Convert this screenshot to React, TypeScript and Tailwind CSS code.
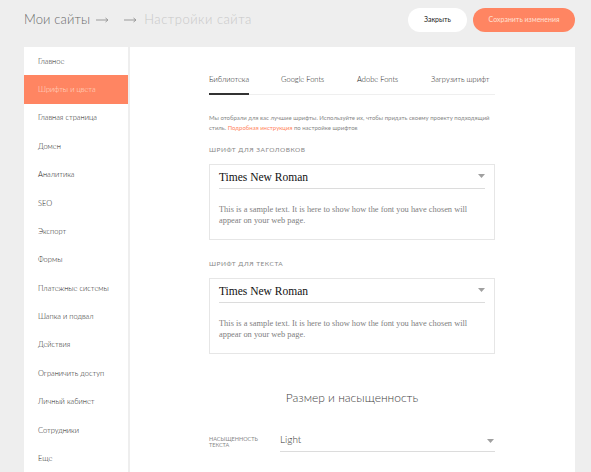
import React from "react";

const FONT = { fontFamily: "Lato, 'Noto Sans', sans-serif" };
const SERIF = { fontFamily: "'Liberation Serif', serif" };

const menu = [
  "Главное",
  "Шрифты и цвета",
  "Главная страница",
  "Домен",
  "Аналитика",
  "SEO",
  "Экспорт",
  "Формы",
  "Платежные системы",
  "Шапка и подвал",
  "Действия",
  "Ограничить доступ",
  "Личный кабинет",
  "Сотрудники",
  "Еще",
];

const tabs = [
  { label: "Библиотека", w: "w-[72px]" },
  { label: "Google Fonts", w: "w-[76px]" },
  { label: "Adobe Fonts", w: "w-[74px]" },
  { label: "Загрузить шрифт", w: "" },
];

const Caret = () => (
  <svg width="7" height="4" viewBox="0 0 7 4">
    <path d="M0 0h7L3.5 4z" fill="#a0a0a0" />
  </svg>
);

const Arrow = ({ color }: { color: string }) => (
  <svg width="13" height="6" viewBox="0 0 13 6">
    <path d="M0 3h12M9.5 1l2.5 2-2.5 2" stroke={color} strokeWidth="1" fill="none" />
  </svg>
);

const FontBox = ({ label }: { label: string }) => (
  <div>
    <div className="text-[6.5px] leading-[8px] uppercase tracking-[0.08em] text-[#888]">{label}</div>
    <div className="mt-[10px] border border-[#e6e6e6] px-[9px] pt-[6px] pb-[13px]">
      <div className="flex items-center justify-between border-b border-[#dcdcdc] pb-[4px]">
        <span className="text-[11.5px] leading-[13px] text-[#111]" style={SERIF}>
          Times New Roman
        </span>
        <span className="mb-[3px]"><Caret /></span>
      </div>
      <p className="mt-[15px] text-[8.4px] leading-[11px] text-[#808080]" style={SERIF}>
        This is a sample text. It is here to show how the font you have chosen will appear on your web page.
      </p>
    </div>
  </div>
);

export default function App() {
  return (
    <div className="w-[591px] h-[472px] overflow-hidden bg-[#eeeeee] pl-[24px] pr-[16px] text-[#333]" style={FONT}>
      {/* Header */}
      <header className="flex h-[47px] items-center justify-between pb-[8px]">
        <div className="flex items-center text-[13px] font-light">
          <span className="text-[#6a6a6a] tracking-[0.01em]">Мои сайты</span>
          <span className="ml-[6px]"><Arrow color="#9a9a9a" /></span>
          <span className="ml-[15px]"><Arrow color="#9a9a9a" /></span>
          <span className="ml-[7px] text-[#c8c8c8] tracking-[0.04em]">Настройки сайта</span>
        </div>
        <div className="flex items-center gap-[6px]">
          <button className="h-[24px] w-[59px] rounded-full bg-white text-[7px] text-[#222]">Закрыть</button>
          <button className="h-[24px] w-[102px] rounded-full bg-[#ff8562] text-[7px] text-[#ffe0d4]">
            Сохранить изменения
          </button>
        </div>
      </header>

      <div className="flex gap-[2px]">
        {/* Sidebar */}
        <aside className="w-[104px] shrink-0 bg-white h-[440px]">
          {menu.map((item) => (
            <div
              key={item}
              className={
                "flex h-[28.4px] items-center pl-[14px] text-[7.5px] font-light whitespace-nowrap " +
                (item === "Шрифты и цвета" ? "bg-[#ff8562] text-[#ffe0d4]" : "text-[#222]")
              }
            >
              {item}
            </div>
          ))}
        </aside>

        {/* Main */}
        <main className="flex-1 bg-white h-[440px]">
          <div className="ml-[79px] w-[286px] pt-[28px]">
            <div className="flex border-b border-[#efefef] text-[7.5px] leading-[9px] font-light text-[#222]">
              {tabs.map((t, i) => (
                <div key={t.label} className={"whitespace-nowrap " + t.w}>
                  <span
                    className={
                      "inline-block pb-[9px] " + (i === 0 ? "border-b-2 border-[#333] -mb-[1px]" : "")
                    }
                  >
                    {t.label}
                  </span>
                </div>
              ))}
            </div>

            <p className="mt-[18px] text-[6px] leading-[10px] text-[#888]">
              Мы отобрали для вас лучшие шрифты. Используйте их, чтобы придать своему проекту подходящий стиль.{" "}
              <span className="text-[#ff8562]">Подробная инструкция</span> по настройке шрифтов
            </p>

            <div className="mt-[13px]">
              <FontBox label="Шрифт для заголовков" />
            </div>
            <div className="mt-[20px]">
              <FontBox label="Шрифт для текста" />
            </div>

            <div className="mt-[36px] text-center text-[12px] leading-[15px] font-light text-[#444]">
              Размер и насыщенность
            </div>

            <div className="mt-[28px] flex items-start">
              <div className="w-[71px] pt-[3px] text-[5.5px] leading-[6px] uppercase text-[#888]">
                Насыщенность
                <br />
                текста
              </div>
              <div className="flex flex-1 items-center justify-between border-b border-[#dcdcdc] pb-[6px]">
                <span className="text-[10px] leading-[12px] font-light text-[#333]">Light</span>
                <span className="mr-[1px] mt-[3px]"><Caret /></span>
              </div>
            </div>
          </div>
        </main>
      </div>
    </div>
  );
}
